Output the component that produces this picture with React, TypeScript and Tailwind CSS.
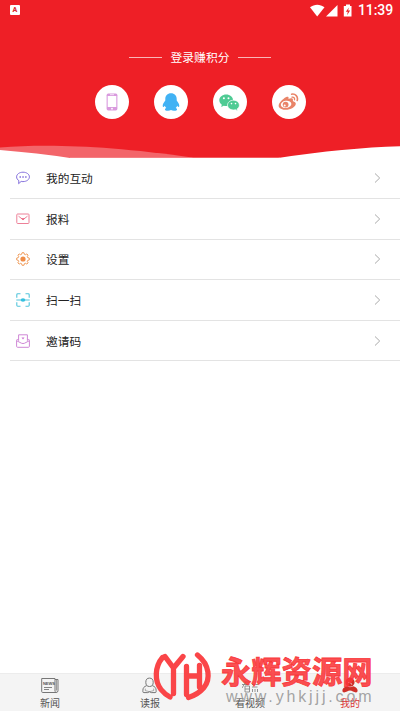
import React from 'react';

type IconProps = {
  className?: string;
};

const PhoneIcon = () => (
  <svg width="12" height="18" viewBox="0 0 12 18" fill="none">
    <rect x="0.6" y="0.6" width="10.8" height="16.8" rx="1.6" fill="#d99ade" />
    <rect x="1.7" y="3" width="8.6" height="11" fill="#fff" />
    <path d="M4 1.7h4" stroke="#fff" strokeWidth="0.7" />
    <circle cx="6" cy="15.7" r="0.9" fill="#fff" />
  </svg>
);

const QQIcon = () => (
  <svg width="18" height="18" viewBox="0 0 18 18" fill="#41b2f4">
    <path d="M9 .3c-3.600 0-5.700 2.600-5.700 5.700v1.600C2.200 9.200.7 11 .7 12.700c0 1 .4 1.400.8 1.200.5-.2 1-.9 1.300-1.200.3 1 .8 1.700 1.500 2.400-1 .4-1.500 1-1.300 1.700.3.800 1.500 1 3 .9 1.200 0 2.300-.3 3-.8.700.5 1.800.8 3 .8 1.500.1 2.700-.1 3-.9.2-.7-.3-1.300-1.300-1.700.7-.7 1.200-1.400 1.500-2.400.3.300.8 1 1.300 1.200.4.200.8-.2.800-1.200 0-1.700-1.500-3.500-2.600-5.100V6C14.700 2.900 12.600.3 9 .3z" />
  </svg>
);

const WechatIcon = () => (
  <svg width="21" height="17" viewBox="0 0 21 17" fill="#4fcb94">
    <path d="M7.200.4C3.300.4.300 3 .300 6.300c0 1.900 1 3.400 2.500 4.500l-.6 2.300 2.600-1.400c.8.200 1.600.3 2.400.3C11 12 14.100 9.500 14.100 6.200S11 .4 7.200.4z" />
    <path
      d="M14.500 6.200c-3.400 0-6 2.200-6 4.900s2.600 4.900 6 4.900c.7 0 1.400-.1 2-.3l2.200 1.200-.6-1.900c1.400-.9 2.300-2.300 2.300-3.900 0-2.700-2.600-4.900-5.900-4.900z"
      stroke="#fff"
      strokeWidth="0.7"
    />
    <circle cx="4.900" cy="4.300" r="1" fill="#fff" />
    <circle cx="9.500" cy="4.300" r="1" fill="#fff" />
    <circle cx="12.500" cy="9.600" r="0.800" fill="#fff" />
    <circle cx="16.500" cy="9.600" r="0.800" fill="#fff" />
  </svg>
);

const WeiboIcon = () => (
  <svg width="21" height="18" viewBox="0 0 21 18" fill="none">
    <path
      d="M8.300 4C10.300 3 11 4.300 10.400 6c2.400-1.100 5-1 4.500 1.400-.1.700.2.800.8 1 3.800 1.300 1.800 4.800-1.100 6.500-4.300 2.600-11.700 2.500-13.700-1C-.4 11.400 3.700 6.400 8.300 4z"
      fill="#e98468"
    />
    <ellipse cx="8.100" cy="11.400" rx="5.300" ry="3.600" transform="rotate(-10 8.100 11.400)" fill="#fff" />
    <circle cx="7.600" cy="11.600" r="2.900" fill="#e98468" />
    <circle cx="6.700" cy="12.400" r="1" fill="#fff" />
    <path d="M13.600 1.200c3.700-.8 6.800 2.500 5.600 6.200" stroke="#e98468" strokeWidth="1.600" strokeLinecap="round" />
    <path d="M14 4.100c1.800-.3 3 1.100 2.500 2.700" stroke="#e98468" strokeWidth="1.300" strokeLinecap="round" />
  </svg>
);

const ChatIcon = () => (
  <svg width="14" height="14" viewBox="0 0 14 14" fill="none" stroke="#8672dd">
    <path d="M7 1.200c3.600 0 6.400 2 6.400 4.700S10.600 10.600 7 10.600c-.7 0-1.200 0-1.800-.2L2.600 12.700l.3-3C1.500 8.800.6 7.500.6 5.900.6 3.200 3.400 1.200 7 1.200z" />
    <path d="M3.500 6h1.500M6.300 6h1.500M9.100 6h1.500" strokeWidth="1.500" />
  </svg>
);

const MailIcon = () => (
  <svg width="14" height="14" viewBox="0 0 14 14" fill="none" stroke="#ed8098">
    <rect x="0.800" y="2" width="12.200" height="9.500" rx="0.800" />
    <path d="M2.500 4.200 7 7.600l4.500-3.400" />
    <path d="M5 6.300h4L7 8.300z" fill="#e9607b" stroke="none" />
  </svg>
);

const GearIcon = () => (
  <svg width="14" height="14" viewBox="0 0 14 14" fill="none" stroke="#f09a58">
    <path
      d="M5.600 2.300 6.100.7h1.800l.5 1.600 1 .4 1.400-.8 1.300 1.300-.8 1.400.4 1 1.600.5v1.800l-1.600.5-.4 1 .8 1.400-1.300 1.300-1.400-.8-1 .4-.5 1.600H6.100l-.5-1.600-1-.4-1.400.8-1.300-1.300.8-1.400-.4-1L.7 7.900V6.100l1.600-.5.4-1-.8-1.400 1.300-1.300 1.400.8z"
      strokeLinejoin="round"
    />
    <circle cx="7" cy="7" r="2.600" fill="#ef8c46" stroke="none" />
  </svg>
);

const ScanIcon = () => (
  <svg width="14" height="14" viewBox="0 0 14 14" fill="none" stroke="#53c5dc">
    <path
      d="M.8 4.700V1.700q0-.9.900-.9h2.800M9.500.8h2.800q.9 0 .9.900v3M13.200 9.300v3q0 .9-.9.900H9.500M4.500 13.200H1.700q-.9 0-.9-.9v-3"
      strokeWidth="1.100"
    />
    <path d="M.3 7h13.400" />
    <ellipse cx="7" cy="7" rx="2.300" ry="1.800" fill="#36c0df" stroke="none" />
  </svg>
);

const InviteIcon = () => (
  <svg width="14" height="14" viewBox="0 0 14 14" fill="none" stroke="#cf88d6">
    <path d="M2.600 6.800V.8h8.800v6" />
    <path d="M2.300 5.500H1.400q-.8 0-.8.800v6q0 1 1 1h10.800q1 0 1-1v-6q0-.8-.8-.8h-.9" />
    <path d="m.8 6.800 4.600 2.400q1.600.7 3.200 0l4.600-2.400" />
    <path d="M5.500 3.400h3L7 5.400z" fill="#cf6fd6" stroke="none" />
  </svg>
);

const NewsIcon = ({ className }: IconProps) => (
  <svg width="18" height="17" viewBox="0 0 18 17" fill="none" stroke="#777" className={className}>
    <path d="M14 14V1.500H.7v13q0 1 1 1H15q2 0 2-1.800V2.500h-3" />
    <path d="M14 14q0 1.500 1.200 1.500M15.500 3v10.500" strokeWidth="0.700" />
    <path d="M3 10.500h8M3 12.500h5" strokeWidth="0.900" />
    <text x="1.900" y="7.900" fontSize="4" fontWeight="700" fill="#555" stroke="none" fontFamily="Liberation Sans, sans-serif">
      NEWS
    </text>
  </svg>
);

const ReaderIcon = ({ className }: IconProps) => (
  <svg width="16" height="17" viewBox="0 0 16 17" fill="none" stroke="#777" strokeLinejoin="round" className={className}>
    <ellipse cx="7.500" cy="5.300" rx="3.700" ry="4.200" />
    <path d="M4.700 8.600C2 9.600.9 11 .9 13.200v1.600q0 .8 1 .8h3.900l1.700-.9 1.700.9h3.900q1 0 1-.8v-1.600c0-2.200-1.100-3.600-3.800-4.600" />
    <path d="M3.300 11.600v2l4.200 1.100 4.200-1.100v-2" strokeWidth="0.600" />
  </svg>
);

// only the upper half shows clearly, the rest sits under the overlay
const VideoIcon = ({ className }: IconProps) => (
  <svg width="17" height="17" viewBox="0 0 17 17" fill="none" stroke="#888" strokeWidth="0.900" className={className}>
    <path d="M0 7.500h7.500M1.500 5h5.500M4 4.500 0 11M3 9h4.500v6H3zM3 12H7.500M10 7.500h6M10 10h5.500M10.500 12v3M13 12v3M15.500 12v3" />
  </svg>
);

const MineIcon = ({ className }: IconProps) => (
  <svg width="16" height="17" viewBox="0 0 16 17" fill="#cf2e28" className={className}>
    <path d="M8 .8a4.600 4.600 0 0 0-4.600 4.500c0 1.600.7 2.900 1.900 3.700L8 9.800l2.700-.8a4.500 4.500 0 0 0 1.900-3.700A4.600 4.600 0 0 0 8 .8z" />
    <path d="M4.600 9.300C2 10.200.4 11.600.4 13.600c0 1.200.6 1.900 1.700 1.900 2 0 3.900-1.900 5.900-1.900s3.900 1.900 5.900 1.900c1.100 0 1.700-.7 1.700-1.900 0-2-1.600-3.400-4.200-4.300L8 10.300z" />
    <path d="M6 5.500c2-.2 3.500.6 3.700 2" fill="none" stroke="#f4f4f4" strokeWidth="0.900" />
  </svg>
);

const logins = [
  { id: 'phone', icon: PhoneIcon },
  { id: 'qq', icon: QQIcon },
  { id: 'wechat', icon: WechatIcon },
  { id: 'weibo', icon: WeiboIcon },
];

const menuItems = [
  { label: '我的互动', icon: ChatIcon },
  { label: '报料', icon: MailIcon },
  { label: '设置', icon: GearIcon },
  { label: '扫一扫', icon: ScanIcon },
  { label: '邀请码', icon: InviteIcon },
];

const tabs = [
  { label: '新闻', icon: NewsIcon },
  { label: '读报', icon: ReaderIcon },
  { label: '看视频', icon: VideoIcon },
  { label: '我的', icon: MineIcon, active: true },
];

const StatusBar = () => (
  <div className="flex h-5 items-center pr-[7px] pl-[10px]">
    <div className="flex h-[10px] w-[10px] items-center justify-center rounded-[1px] bg-white font-['Roboto',sans-serif] text-[7px] leading-none font-black text-[#d92b30]">
      A
    </div>
    <svg className="ml-auto" width="44" height="13" viewBox="0 0 44 13" fill="#fff">
      <path d="M1 3.300C5.500-.1 11-.1 15.500 3.300L8.200 12.500z" />
      <path d="M28.500 1v11.500H17z" />
      <path d="M37 .5h4V2h1.500v10.500h-7.700V2H37z" />
      <path d="m39.900 3.500-3.100 4.200h2l-.7 3.500 3-4.600h-2z" fill="#ee1f26" />
    </svg>
    <span className="ml-[5px] w-[35px] font-['Roboto',sans-serif] text-[14px] leading-5 font-medium tracking-[-0.100px] whitespace-nowrap text-white">
      11:39
    </span>
  </div>
);

const Header = () => (
  <header className="relative h-[158px] shrink-0 bg-[#ee1f26]">
    <svg className="absolute bottom-0 left-0" width="400" height="14" viewBox="0 0 400 14">
      <path d="M0 3.500C50-.3 110 2 192 13.500L193 14H0z" fill="#f3656a" />
      <path d="M0 6 Q38 9 70 14H0z" fill="#fff" />
      <path d="M400 2.300Q345 4 278 14H400z" fill="#fff" />
      <path d="M70 13.700h210" stroke="#f89a9d" strokeWidth="0.600" />
    </svg>
    <div className="relative">
      <StatusBar />
      <div className="mt-[27px] flex h-5 items-center justify-center">
        <span className="h-px w-[33px] bg-[#f9b5b7]" />
        <span className="mx-[8.500px] text-[11.800px] leading-5 text-white">登录赚积分</span>
        <span className="h-px w-[33px] bg-[#f9b5b7]" />
      </div>
      <div className="mt-[18px] flex justify-center gap-[25px]">
        {logins.map(({ id, icon: Icon }) => (
          <button key={id} className="flex h-[34px] w-[34px] items-center justify-center rounded-full bg-white" aria-label={id}>
            <Icon />
          </button>
        ))}
      </div>
    </div>
  </header>
);

const Watermark = () => (
  <div className="pointer-events-none absolute top-[650px] left-[153px] flex">
    <svg width="60" height="54" viewBox="0 0 60 54" fill="none" stroke="#fa373a" strokeOpacity="0.930" strokeWidth="5.300" strokeLinecap="round">
      <path
        d="M9.500 7.500C1.500 17 1.500 31 8 39.500Q12 44.500 17 47M12 6.500 20.500 18 30 6.500M20.500 18V43.500M33.500 16.500V44.500M33.500 26H46.500M46.500 15.500V37M44.500 5C57 15 57.500 29 51 37.500Q45 44.500 35.500 47.500"
        strokeLinejoin="round"
      />
    </svg>
    <div className="relative ml-[8px]">
      <div className="text-[30.300px] leading-[40px] font-bold whitespace-nowrap text-[#fa373a]/90 [-webkit-text-stroke:0.800px_#fa373a]">
        永辉资源网
      </div>
      <div className="absolute top-[37px] left-[5px] font-['Liberation_Sans',sans-serif] text-[16px] leading-5 tracking-[2.850px] whitespace-nowrap text-[#999]/90">
        www.yhkjjj.com
      </div>
    </div>
  </div>
);

const App = () => {
  return (
    <div className="relative flex h-[711px] w-[400px] flex-col overflow-hidden bg-white font-['Noto_Sans_CJK_SC',sans-serif]">
      <Header />
      <main className="flex-1 pt-[0.400px]">
        {menuItems.map(({ label, icon: Icon }) => (
          <div key={label} className="ml-[10px] flex h-[40.600px] items-center border-b border-[#e3e3e3] pr-[19px] pl-[6px]">
            <Icon />
            <span className="ml-4 text-[11.700px] leading-5 text-[#222]">{label}</span>
            <svg className="ml-auto" width="7" height="10" viewBox="0 0 7 10" fill="none" stroke="#aaa" strokeWidth="1">
              <path d="m1 .5 4.700 4.500L1 9.500" />
            </svg>
          </div>
        ))}
      </main>
      <nav className="grid h-[38px] shrink-0 grid-cols-4 border-t border-[#ececec] bg-[#f4f4f4]">
        {tabs.map(({ label, icon: Icon, active }) => (
          <div key={label} className="flex flex-col items-center pt-[3px]">
            <Icon className="shrink-0" />
            <span className={`text-[10px] leading-[18px] ${active ? 'text-[#d93434]' : 'text-[#555]'}`}>{label}</span>
          </div>
        ))}
      </nav>
      <Watermark />
    </div>
  );
};

export default App;
